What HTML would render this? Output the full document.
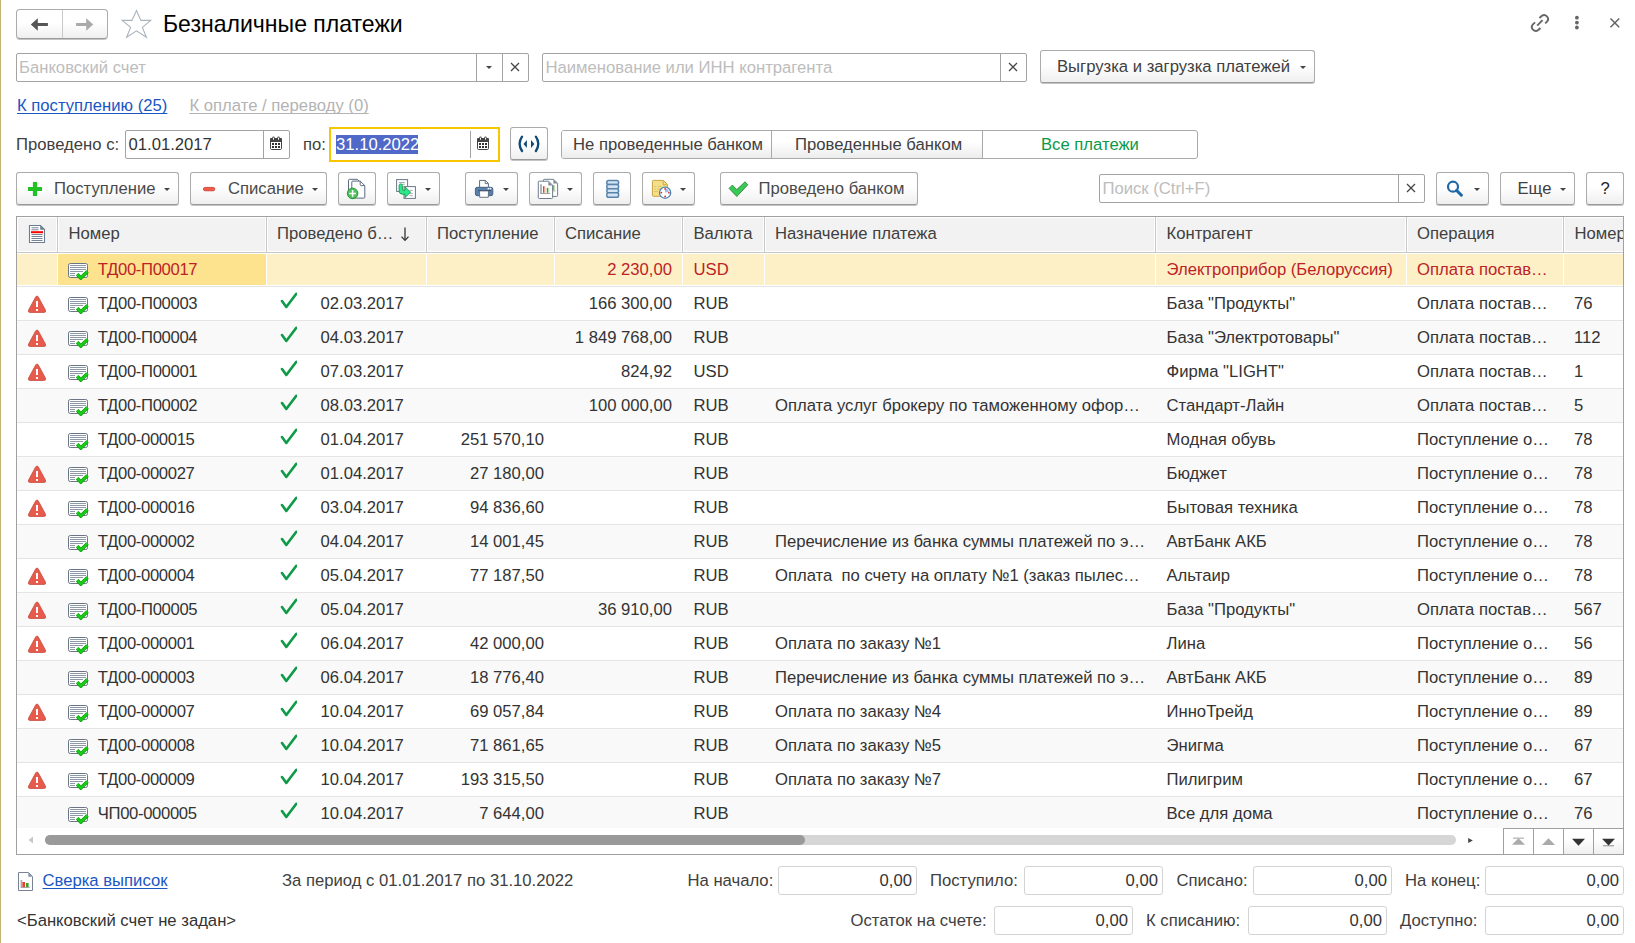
<!DOCTYPE html><html><head><meta charset="utf-8"><title>Безналичные платежи</title><style>
*{margin:0;padding:0;box-sizing:content-box}
html,body{width:1635px;height:943px;overflow:hidden;background:#fff}
body{position:relative;font-family:"Liberation Sans",sans-serif;font-size:16.67px}
.a{position:absolute;display:block}
.t{position:absolute;white-space:pre;line-height:20px;font-size:16.67px}
.btn{position:absolute;border:1px solid #ababab;border-bottom-color:#9a9a9a;background:linear-gradient(#fff 0,#fff 45%,#efefef 100%);box-shadow:0 1px 0 #c4c4c4}
.inp{position:absolute;border:1px solid #a3a3a3;border-radius:2px;background:#fff}
.inp2{position:absolute;border:1px solid #d3d3d3;border-radius:3px;background:#fff}
.u{text-decoration:underline;text-decoration-skip-ink:none;text-underline-offset:2px}
</style></head><body>
<div class="a" style="left:0px;top:0px;width:1px;height:943px;background:#c1b571"></div>
<div class="btn" style="left:16px;top:9px;width:90px;height:28px;border-radius:4px"></div>
<div class="a" style="left:62px;top:10px;width:1px;height:28px;background:#c9c9c9"></div>
<svg class="a" style="left:30px;top:18px;" width="18" height="13" viewBox="0 0 18 13"><path d="M0.8 6.5L7.8 0.2V4.9H17.9V8.1H7.8V12.8Z" fill="#555"/></svg>
<svg class="a" style="left:76px;top:18px;" width="18" height="13" viewBox="0 0 18 13"><path d="M17.2 6.5L10.2 0.2V4.9H0.1V8.1H10.2V12.8Z" fill="#aaa"/></svg>
<svg class="a" style="left:120px;top:8px;" width="34" height="32" viewBox="0 0 34 32"><path d="M16.5 2.6L20.9 12.4H30.7L22.4 19.4L26.4 29.3L16.5 22.8L6.6 29.3L10.6 19.4L2.2 12.4H11.9Z" fill="none" stroke="#aab3bd" stroke-width="1.1" stroke-linejoin="miter"/></svg>
<div class="t" style="left:162.5px;top:12px;font-size:24px;line-height:24px;color:#000;transform:scaleX(0.96);transform-origin:0 0">Безналичные платежи</div>
<svg class="a" style="left:1529px;top:12px;" width="22" height="22" viewBox="0 0 22 22"><g fill="none" stroke="#666" stroke-width="1.9"><path d="M10.45 6.06L12.61 3.99A3.9 3.9 0 0 1 17.99 9.61L16.19 11.34"/><path d="M6.07 10.32L3.91 12.39A3.9 3.9 0 0 0 9.29 18.01L11.45 15.94"/><path d="M8.2 13.7L13.5 8.1"/></g></svg>
<svg class="a" style="left:1573px;top:15px;" width="8" height="16" viewBox="0 0 8 16"><g fill="#666"><circle cx="3.9" cy="2.7" r="1.9"/><circle cx="3.9" cy="7.6" r="1.9"/><circle cx="3.9" cy="12.5" r="1.9"/></g></svg>
<svg class="a" style="left:1609px;top:17px;" width="12" height="12" viewBox="0 0 12 12"><path d="M1.5 1.5L10.2 10.2M10.2 1.5L1.5 10.2" stroke="#666" stroke-width="1.5"/></svg>
<div class="inp" style="left:16px;top:53px;width:511px;height:27px"></div>
<div class="a" style="left:476px;top:54px;width:1px;height:27px;background:#a3a3a3"></div>
<div class="a" style="left:502px;top:54px;width:1px;height:27px;background:#a3a3a3"></div>
<svg class="a" style="left:486px;top:66px;" width="6" height="3" viewBox="0 0 6 3"><path d="M0 0H6L3 3Z" fill="#444"/></svg>
<svg class="a" style="left:510.0px;top:62.0px;" width="10" height="10" viewBox="0 0 10 10"><path d="M1 1L9 9M9 1L1 9" stroke="#444" stroke-width="1.3"/></svg>
<div class="t " style="left:19px;top:58px;color:#bdbdbd;">Банковский счет</div>
<div class="inp" style="left:542px;top:53px;width:483px;height:27px"></div>
<div class="a" style="left:1000px;top:54px;width:1px;height:27px;background:#a3a3a3"></div>
<svg class="a" style="left:1008.0px;top:62.0px;" width="10" height="10" viewBox="0 0 10 10"><path d="M1 1L9 9M9 1L1 9" stroke="#444" stroke-width="1.3"/></svg>
<div class="t " style="left:545.5px;top:58px;color:#bdbdbd;">Наименование или ИНН контрагента</div>
<div class="btn" style="left:1040px;top:50px;width:273px;height:31px;border-radius:3px"></div>
<div class="t " style="left:1057px;top:57px;color:#404040;">Выгрузка и загрузка платежей</div>
<svg class="a" style="left:1300px;top:66px;" width="6" height="3" viewBox="0 0 6 3"><path d="M0 0H6L3 3Z" fill="#444"/></svg>
<div class="t u" style="left:17px;top:96px;color:#1a56c4;">К поступлению (25)</div>
<div class="t u" style="left:189.5px;top:96px;color:#b3b3b3;">К оплате / переводу (0)</div>
<div class="t " style="left:16px;top:135px;color:#404040;">Проведено с:</div>
<div class="inp" style="left:125px;top:130px;width:163px;height:27px"></div>
<div class="a" style="left:263px;top:131px;width:1px;height:27px;background:#a3a3a3"></div>
<div class="t " style="left:128.5px;top:135px;color:#333;">01.01.2017</div>
<svg class="a" style="left:270px;top:136px;" width="12" height="14" viewBox="0 0 12 14"><rect x="0.5" y="2.5" width="11" height="11" rx="1.2" fill="#fff" stroke="#444" stroke-width="1"/><rect x="0" y="2" width="12" height="4" rx="1.2" fill="#444"/><rect x="2.3" y="0.6" width="2.4" height="3.4" rx="1.2" fill="#444"/><rect x="7.3" y="0.6" width="2.4" height="3.4" rx="1.2" fill="#444"/><rect x="3" y="1.6" width="1" height="2.2" rx="0.5" fill="#fff"/><rect x="8" y="1.6" width="1" height="2.2" rx="0.5" fill="#fff"/><g fill="#333"><rect x="2" y="7" width="2" height="2"/><rect x="5" y="7" width="2" height="2"/><rect x="8" y="7" width="2" height="2"/><rect x="2" y="10" width="2" height="2"/><rect x="5" y="10" width="2" height="2"/><rect x="8" y="10" width="2" height="2"/></g></svg>
<div class="t " style="left:303px;top:135px;color:#404040;">по:</div>
<div class="a" style="left:329px;top:127px;width:167px;height:31px;border:2px solid #f7c600;background:#fff"></div>
<div class="a" style="left:470px;top:131px;width:1px;height:27px;background:#a3a3a3"></div>
<div class="a" style="left:336px;top:135px;width:82px;height:19px;background:#5068c8"></div>
<div class="t " style="left:336px;top:135px;color:#fff;">31.10.2022</div>
<svg class="a" style="left:477px;top:136px;" width="12" height="14" viewBox="0 0 12 14"><rect x="0.5" y="2.5" width="11" height="11" rx="1.2" fill="#fff" stroke="#444" stroke-width="1"/><rect x="0" y="2" width="12" height="4" rx="1.2" fill="#444"/><rect x="2.3" y="0.6" width="2.4" height="3.4" rx="1.2" fill="#444"/><rect x="7.3" y="0.6" width="2.4" height="3.4" rx="1.2" fill="#444"/><rect x="3" y="1.6" width="1" height="2.2" rx="0.5" fill="#fff"/><rect x="8" y="1.6" width="1" height="2.2" rx="0.5" fill="#fff"/><g fill="#333"><rect x="2" y="7" width="2" height="2"/><rect x="5" y="7" width="2" height="2"/><rect x="8" y="7" width="2" height="2"/><rect x="2" y="10" width="2" height="2"/><rect x="5" y="10" width="2" height="2"/><rect x="8" y="10" width="2" height="2"/></g></svg>
<div class="btn" style="left:510px;top:127px;width:36px;height:31px;border-radius:3px"></div>
<svg class="a" style="left:516px;top:134px;" width="26" height="20" viewBox="0 0 26 20"><g fill="none" stroke="#0d4a78" stroke-width="2.3" stroke-linecap="round"><path d="M6 2.7Q1.2 9.8 6 17"/><path d="M19.9 2.7Q24.7 9.8 19.9 17"/></g><path d="M7.5 9.9L10.9 5.9V14Z" fill="#0d4a78"/><path d="M18.4 9.9L15 5.9V14Z" fill="#0d4a78"/></svg>
<div class="a" style="left:561px;top:130px;width:635px;height:27px;border:1px solid #a9a9a9;border-radius:3px;background:#fff;overflow:hidden"><div class="a" style="left:0;top:0;width:421px;height:27px;background:linear-gradient(#fff 0,#fff 40%,#ececec 100%)"></div><div class="a" style="left:209px;top:0;width:1px;height:27px;background:#a9a9a9"></div><div class="a" style="left:420px;top:0;width:1px;height:27px;background:#a9a9a9"></div></div>
<div class="t " style="left:573px;top:135px;color:#404040;">Не проведенные банком</div>
<div class="t " style="left:795px;top:135px;color:#404040;">Проведенные банком</div>
<div class="t " style="left:1041px;top:135px;color:#0a9a48;">Все платежи</div>
<div class="btn" style="left:16px;top:172px;width:161px;height:31px;border-radius:3px"></div>
<svg class="a" style="left:27px;top:181px;" width="16" height="16" viewBox="0 0 16 16"><path d="M5.9 1H10.1V5.9H15V10.1H10.1V15H5.9V10.1H1V5.9H5.9Z" fill="#22c222"/></svg>
<div class="t " style="left:54px;top:179px;color:#4a4a4a;">Поступление</div>
<svg class="a" style="left:164px;top:188px;" width="6" height="3" viewBox="0 0 6 3"><path d="M0 0H6L3 3Z" fill="#444"/></svg>
<div class="btn" style="left:190px;top:172px;width:135px;height:31px;border-radius:3px"></div>
<svg class="a" style="left:202px;top:186px;" width="14" height="6" viewBox="0 0 14 6"><rect x="1.4" y="1.4" width="11.4" height="3.4" rx="1.7" fill="#ee5b4c" stroke="#c8382a" stroke-width="0.8"/></svg>
<div class="t " style="left:228px;top:179px;color:#4a4a4a;">Списание</div>
<svg class="a" style="left:312px;top:188px;" width="6" height="3" viewBox="0 0 6 3"><path d="M0 0H6L3 3Z" fill="#444"/></svg>
<div class="btn" style="left:338px;top:172px;width:36px;height:31px;border-radius:3px"></div>
<svg class="a" style="left:344px;top:176px;" width="26" height="26" viewBox="0 0 26 26"><g fill="#fff" stroke="#5b6b7e" stroke-width="1"><path d="M4.5 18V4.2Q4.5 3.3 5.4 3.3H13.2L15 5"/><path d="M7.8 22.1V6Q7.8 5.1 8.7 5.1H16.2L20.8 9.6V21.2Q20.8 22.1 19.9 22.1Z"/><path d="M16.2 5.3V8.6Q16.2 9.6 17.2 9.6H20.6" fill="none"/></g><circle cx="8.6" cy="17.4" r="5.3" fill="#52bf5e" stroke="#17922a" stroke-width="0.9"/><path d="M5.2 17.4H12M8.6 14V20.8" stroke="#fff" stroke-width="1.5"/></svg>
<div class="btn" style="left:387px;top:172px;width:51px;height:31px;border-radius:3px"></div>
<svg class="a" style="left:393px;top:176px;" width="26" height="26" viewBox="0 0 26 26"><rect x="3.6" y="3.6" width="11" height="11.8" fill="#fff" stroke="#6b7889" stroke-width="1"/><path d="M6 6.5H11.8M8.8 8.3H11.8" stroke="#9aa5b2" stroke-width="0.9"/><rect x="11" y="10.6" width="11.4" height="11.8" fill="#fff" stroke="#6b7889" stroke-width="1"/><path d="M16.5 14.3H19.8M16.5 17.4H19.8M16.5 19.6H19.8" stroke="#9aa5b2" stroke-width="0.9"/><path d="M6.1 9.6Q6.1 7.9 7.7 7.9Q9.4 7.9 9.4 9.6V13.6Q9.4 14.3 10.2 14.3H12V10.9L17.6 16.2L12 21.6V18.2H9.4Q6.1 18.2 6.1 14.8Z" fill="#2ee88c" stroke="#17984a" stroke-width="0.9" stroke-linejoin="round"/></svg>
<svg class="a" style="left:425px;top:188px;" width="6" height="3" viewBox="0 0 6 3"><path d="M0 0H6L3 3Z" fill="#444"/></svg>
<div class="btn" style="left:465px;top:172px;width:51px;height:31px;border-radius:3px"></div>
<svg class="a" style="left:471px;top:176px;" width="26" height="26" viewBox="0 0 26 26"><path d="M8.6 11V4.4H14.4L17.4 7.4V11" fill="#fff" stroke="#5c6878" stroke-width="1"/><path d="M14.2 4.6V7.6H17.2" fill="none" stroke="#5c6878" stroke-width="0.9"/><rect x="4.4" y="11.3" width="17.4" height="8.4" rx="1.8" fill="#5a80aa" stroke="#395a82" stroke-width="0.9"/><rect x="7.2" y="14" width="12.8" height="1.1" fill="#3a5070"/><circle cx="17.4" cy="12.6" r="0.9" fill="#fff"/><circle cx="19.5" cy="12.6" r="0.9" fill="#fff"/><path d="M8.5 14.9H17.5L17.3 21.3H8.7Z" fill="#fff" stroke="#5c6878" stroke-width="0.9"/></svg>
<svg class="a" style="left:503px;top:188px;" width="6" height="3" viewBox="0 0 6 3"><path d="M0 0H6L3 3Z" fill="#444"/></svg>
<div class="btn" style="left:529px;top:172px;width:51px;height:31px;border-radius:3px"></div>
<svg class="a" style="left:535px;top:176px;" width="26" height="26" viewBox="0 0 26 26"><path d="M8.4 14V4.2Q8.4 3.3 9.3 3.3H18.6L22.6 7.3V19.6Q22.6 20.4 21.8 20.4H17.6" fill="#fff" stroke="#6e7d8e" stroke-width="1"/><path d="M18.4 3.5V7.5H22.4Z" fill="#7d8a99"/><rect x="17.2" y="9.2" width="1.6" height="5" fill="#4aa83a"/><rect x="18.8" y="9.2" width="1" height="5" fill="#a8dca0"/><rect x="17" y="14.4" width="3.5" height="1" fill="#aaa"/><path d="M3.3 21.6V6.1Q3.3 5.2 4.2 5.2H13.6L17.6 9.2V21.6Q17.6 22.5 16.7 22.5H4.2Q3.3 22.5 3.3 21.6Z" fill="#fff" stroke="#6e7d8e" stroke-width="1"/><path d="M13.4 5.4V9.4H17.4Z" fill="#7d8a99"/><rect x="5.2" y="8.3" width="1.7" height="8.8" fill="#a8a8a8"/><rect x="8" y="10.2" width="1.5" height="6.6" fill="#e8402a"/><rect x="9.5" y="10.2" width="1" height="6.6" fill="#f6b0a8"/><rect x="11.8" y="11.9" width="1.5" height="4.9" fill="#3aa02a"/><rect x="13.3" y="11.9" width="1" height="4.9" fill="#b0dca8"/><rect x="5.2" y="17" width="10" height="0.9" fill="#999"/></svg>
<svg class="a" style="left:567px;top:188px;" width="6" height="3" viewBox="0 0 6 3"><path d="M0 0H6L3 3Z" fill="#444"/></svg>
<div class="btn" style="left:593px;top:172px;width:36px;height:31px;border-radius:3px"></div>
<svg class="a" style="left:599px;top:176px;" width="26" height="26" viewBox="0 0 26 26"><g fill="#d3e5f5" stroke="#5a83aa" stroke-width="1.5"><rect x="7.8" y="4.6" width="11.8" height="4" rx="1.8"/><rect x="7.8" y="8.6" width="11.8" height="4.1" rx="1.8"/><rect x="7.8" y="12.7" width="11.8" height="4.1" rx="1.8"/><rect x="7.8" y="16.8" width="11.8" height="4.4" rx="1.8"/></g></svg>
<div class="btn" style="left:642px;top:172px;width:51px;height:31px;border-radius:3px"></div>
<svg class="a" style="left:648px;top:176px;" width="26" height="26" viewBox="0 0 26 26"><path d="M4.4 19.4V5.3Q4.4 4.4 5.3 4.4H15.4L19.6 8.6V19.4Q19.6 20.3 18.7 20.3H5.3Q4.4 20.3 4.4 19.4Z" fill="#f3df88" stroke="#c9a440" stroke-width="1"/><path d="M15.2 4.6V8.8H19.4" fill="none" stroke="#c9a440" stroke-width="0.9"/><path d="M6.3 10.5H8.4M10 10.5H13.4M6.3 13.2H7.9M9.5 13.2H12M6.3 15.5H10" stroke="#d8c070" stroke-width="0.9"/><circle cx="17.1" cy="16.7" r="5.6" fill="#fff" stroke="#4e82b5" stroke-width="1.3"/><path d="M17.1 16.7V12.6A4.1 4.1 0 0 1 21 15.2Z" fill="#98b8e0"/><g fill="#e03030"><circle cx="17.1" cy="12.9" r="0.9"/><circle cx="17.1" cy="20.5" r="0.9"/><circle cx="13.3" cy="16.7" r="0.9"/><circle cx="20.9" cy="16.7" r="0.9"/></g></svg>
<svg class="a" style="left:680px;top:188px;" width="6" height="3" viewBox="0 0 6 3"><path d="M0 0H6L3 3Z" fill="#444"/></svg>
<div class="btn" style="left:720px;top:172px;width:196px;height:31px;border-radius:3px"></div>
<svg class="a" style="left:724px;top:176px;" width="30" height="26" viewBox="0 0 30 26"><path d="M5.1 12.4L8.4 9.1L12.8 13.6L21 5.8L23.8 8.8L12.8 20.5Z" fill="#3ac858" stroke="#2a7d2a" stroke-width="0.8" stroke-linejoin="round"/></svg>
<div class="t " style="left:758.5px;top:179px;color:#4a4a4a;">Проведено банком</div>
<div class="inp" style="left:1099px;top:174px;width:324px;height:27px"></div>
<div class="a" style="left:1398px;top:175px;width:1px;height:27px;background:#a3a3a3"></div>
<svg class="a" style="left:1406.0px;top:183.0px;" width="10" height="10" viewBox="0 0 10 10"><path d="M1 1L9 9M9 1L1 9" stroke="#444" stroke-width="1.3"/></svg>
<div class="t " style="left:1102.5px;top:179px;color:#bdbdbd;">Поиск (Ctrl+F)</div>
<div class="btn" style="left:1436px;top:172px;width:51px;height:31px;border-radius:3px"></div>
<svg class="a" style="left:1445px;top:179px;" width="20" height="20" viewBox="0 0 20 20"><circle cx="8" cy="7.7" r="5" fill="none" stroke="#1f68a6" stroke-width="2.2"/><path d="M11.6 11.4L16.4 16.2" stroke="#1f68a6" stroke-width="3" stroke-linecap="round"/></svg>
<svg class="a" style="left:1474px;top:188px;" width="6" height="3" viewBox="0 0 6 3"><path d="M0 0H6L3 3Z" fill="#444"/></svg>
<div class="btn" style="left:1500px;top:172px;width:73px;height:31px;border-radius:3px"></div>
<div class="t " style="left:1517.5px;top:179px;color:#404040;">Еще</div>
<svg class="a" style="left:1560px;top:188px;" width="6" height="3" viewBox="0 0 6 3"><path d="M0 0H6L3 3Z" fill="#444"/></svg>
<div class="btn" style="left:1586px;top:172px;width:36px;height:31px;border-radius:3px"></div>
<div class="t " style="left:1600.5px;top:179px;color:#222;">?</div>
<div class="a" style="left:16px;top:216px;width:1606px;height:637px;border:1px solid #a0a0a0;background:#fff"></div>
<div class="a" style="left:17px;top:217px;width:1606px;height:35px;background:#fff"></div>
<div class="a" style="left:18px;top:218px;width:38px;height:33px;background:#f2f2f2"></div>
<div class="a" style="left:59px;top:218px;width:206px;height:33px;background:#f2f2f2"></div>
<div class="a" style="left:268px;top:218px;width:157px;height:33px;background:#f2f2f2"></div>
<div class="a" style="left:428px;top:218px;width:125px;height:33px;background:#f2f2f2"></div>
<div class="a" style="left:556px;top:218px;width:125px;height:33px;background:#f2f2f2"></div>
<div class="a" style="left:684px;top:218px;width:79px;height:33px;background:#f2f2f2"></div>
<div class="a" style="left:766px;top:218px;width:388px;height:33px;background:#f2f2f2"></div>
<div class="a" style="left:1157px;top:218px;width:248px;height:33px;background:#f2f2f2"></div>
<div class="a" style="left:1408px;top:218px;width:154px;height:33px;background:#f2f2f2"></div>
<div class="a" style="left:1565px;top:218px;width:58px;height:33px;background:#f2f2f2"></div>
<div class="a" style="left:57px;top:217px;width:1px;height:35px;background:#c8c8c8"></div>
<div class="a" style="left:266px;top:217px;width:1px;height:35px;background:#c8c8c8"></div>
<div class="a" style="left:426px;top:217px;width:1px;height:35px;background:#c8c8c8"></div>
<div class="a" style="left:554px;top:217px;width:1px;height:35px;background:#c8c8c8"></div>
<div class="a" style="left:682px;top:217px;width:1px;height:35px;background:#c8c8c8"></div>
<div class="a" style="left:764px;top:217px;width:1px;height:35px;background:#c8c8c8"></div>
<div class="a" style="left:1155px;top:217px;width:1px;height:35px;background:#c8c8c8"></div>
<div class="a" style="left:1406px;top:217px;width:1px;height:35px;background:#c8c8c8"></div>
<div class="a" style="left:1563px;top:217px;width:1px;height:35px;background:#c8c8c8"></div>
<div class="a" style="left:17px;top:252px;width:1606px;height:1px;background:#c8c8c8"></div>
<svg class="a" style="left:28px;top:224px;" width="18" height="20" viewBox="0 0 18 20"><path d="M1.5 18.5V1.5H12.5L16.5 5.5V18.5Z" fill="#fff" stroke="#6c7d90" stroke-width="1.1"/><path d="M12.2 1.6V5.8H16.4Z" fill="#6c7d90"/><g stroke="#75869a" stroke-width="1"><path d="M3.5 3.8H10.5M3.5 5.8H10.5M3.5 10.5H14.5M3.5 12.5H14.5M3.5 14.5H14.5M3.5 16.5H14.5"/></g><rect x="3" y="7.2" width="12" height="2" fill="#f00"/></svg>
<div class="t " style="left:68.5px;top:224px;color:#404040;">Номер</div>
<div class="t " style="left:277px;top:224px;color:#404040;">Проведено б…</div>
<svg class="a" style="left:400px;top:227px;" width="10" height="15" viewBox="0 0 10 15"><path d="M5 0.5V13" stroke="#333" stroke-width="1.3"/><path d="M1.5 9.6L5 13.4L8.5 9.6" fill="none" stroke="#333" stroke-width="1.3"/></svg>
<div class="t " style="left:437px;top:224px;color:#404040;">Поступление</div>
<div class="t " style="left:565px;top:224px;color:#404040;">Списание</div>
<div class="t " style="left:693.5px;top:224px;color:#404040;">Валюта</div>
<div class="t " style="left:775px;top:224px;color:#404040;">Назначение платежа</div>
<div class="t " style="left:1166.5px;top:224px;color:#404040;">Контрагент</div>
<div class="t " style="left:1417px;top:224px;color:#404040;">Операция</div>
<div class="a" style="left:1564px;top:218px;width:59px;height:33px;overflow:hidden"><div class="t" style="left:10.5px;top:6px;color:#404040">Номер</div></div>
<div class="a" style="left:17px;top:253px;width:1606px;height:575px;overflow:hidden">
<div class="a" style="left:0px;top:1px;width:40px;height:31px;background:#fdf0c6"></div>
<div class="a" style="left:41px;top:1px;width:208px;height:31px;background:#fde38e"></div>
<div class="a" style="left:250px;top:1px;width:159px;height:31px;background:#fdf0c6"></div>
<div class="a" style="left:410px;top:1px;width:127px;height:31px;background:#fdf0c6"></div>
<div class="a" style="left:538px;top:1px;width:127px;height:31px;background:#fdf0c6"></div>
<div class="a" style="left:666px;top:1px;width:81px;height:31px;background:#fdf0c6"></div>
<div class="a" style="left:748px;top:1px;width:390px;height:31px;background:#fdf0c6"></div>
<div class="a" style="left:1139px;top:1px;width:250px;height:31px;background:#fdf0c6"></div>
<div class="a" style="left:1390px;top:1px;width:156px;height:31px;background:#fdf0c6"></div>
<div class="a" style="left:1547px;top:1px;width:59px;height:31px;background:#fdf0c6"></div>
<div class="a" style="left:0px;top:33px;width:1606px;height:1px;background:#e4e4e4"></div>
<svg class="a" style="left:51px;top:10px" width="21" height="17" viewBox="0 0 21 17"><rect x="0.5" y="0.5" width="19" height="14" rx="1.8" fill="#fff" stroke="#6b7585" stroke-width="1"/><g stroke="#8d99a6" stroke-width="1"><path d="M2 2.5H18M2 4.5H18M2 6.5H18M2 8.5H15M2 10.5H7M2 12.5H7"/></g><path d="M9.2 11.3L12.8 15L19.5 8.5" fill="none" stroke="#139a13" stroke-width="3.6" stroke-linejoin="miter"/><path d="M9.2 11.3L12.8 15L19.5 8.5" fill="none" stroke="#16d016" stroke-width="2.2" stroke-linejoin="miter"/></svg>
<div class="t" style="left:80.8px;top:7px;color:#bc2228;letter-spacing:-0.35px">ТД00-П00017</div>
<div class="t" style="right:951px;top:7px;color:#bc2228">2 230,00</div>
<div class="t" style="left:676.5px;top:7px;color:#bc2228">USD</div>
<div class="t" style="left:1149.5px;top:7px;color:#bc2228">Электроприбор (Белоруссия)</div>
<div class="t" style="left:1400px;top:7px;color:#bc2228">Оплата постав…</div>
<div class="a" style="left:0px;top:34px;width:1606px;height:33px;background:#fff"></div>
<div class="a" style="left:0px;top:67px;width:1606px;height:1px;background:#e4e4e4"></div>
<svg class="a" style="left:11px;top:42px" width="18" height="19" viewBox="0 0 18 19"><path d="M9 1.1Q9.8 1.1 10.3 1.9L17.5 15.2Q18 17.4 16.4 17.4H1.6Q0 17.4 0.5 15.2L7.7 1.9Q8.2 1.1 9 1.1Z" fill="#e85b4c" stroke="#c4473a" stroke-width="0.8"/><rect x="8" y="6" width="2" height="6" fill="#fff"/><rect x="8" y="14" width="2" height="2" fill="#fff"/></svg>
<svg class="a" style="left:51px;top:44px" width="21" height="17" viewBox="0 0 21 17"><rect x="0.5" y="0.5" width="19" height="14" rx="1.8" fill="#fff" stroke="#6b7585" stroke-width="1"/><g stroke="#8d99a6" stroke-width="1"><path d="M2 2.5H18M2 4.5H18M2 6.5H18M2 8.5H15M2 10.5H7M2 12.5H7"/></g><path d="M9.2 11.3L12.8 15L19.5 8.5" fill="none" stroke="#139a13" stroke-width="3.6" stroke-linejoin="miter"/><path d="M9.2 11.3L12.8 15L19.5 8.5" fill="none" stroke="#16d016" stroke-width="2.2" stroke-linejoin="miter"/></svg>
<div class="t" style="left:80.8px;top:41px;color:#333;letter-spacing:-0.35px">ТД00-П00003</div>
<svg class="a" style="left:263px;top:39px" width="17" height="17" viewBox="0 0 17 17"><path d="M2 9L6.3 15L16.3 1.8" fill="none" stroke="#0f9a48" stroke-width="2.6" stroke-linecap="round" stroke-linejoin="round"/></svg>
<div class="t" style="left:303.5px;top:41px;color:#333">02.03.2017</div>
<div class="t" style="right:951px;top:41px;color:#333">166 300,00</div>
<div class="t" style="left:676.5px;top:41px;color:#333">RUB</div>
<div class="t" style="left:1149.5px;top:41px;color:#333">База "Продукты"</div>
<div class="t" style="left:1400px;top:41px;color:#333">Оплата постав…</div>
<div class="t" style="left:1557px;top:41px;color:#333">76</div>
<div class="a" style="left:0px;top:68px;width:1606px;height:33px;background:#f9f9f9"></div>
<div class="a" style="left:0px;top:101px;width:1606px;height:1px;background:#e4e4e4"></div>
<svg class="a" style="left:11px;top:76px" width="18" height="19" viewBox="0 0 18 19"><path d="M9 1.1Q9.8 1.1 10.3 1.9L17.5 15.2Q18 17.4 16.4 17.4H1.6Q0 17.4 0.5 15.2L7.7 1.9Q8.2 1.1 9 1.1Z" fill="#e85b4c" stroke="#c4473a" stroke-width="0.8"/><rect x="8" y="6" width="2" height="6" fill="#fff"/><rect x="8" y="14" width="2" height="2" fill="#fff"/></svg>
<svg class="a" style="left:51px;top:78px" width="21" height="17" viewBox="0 0 21 17"><rect x="0.5" y="0.5" width="19" height="14" rx="1.8" fill="#fff" stroke="#6b7585" stroke-width="1"/><g stroke="#8d99a6" stroke-width="1"><path d="M2 2.5H18M2 4.5H18M2 6.5H18M2 8.5H15M2 10.5H7M2 12.5H7"/></g><path d="M9.2 11.3L12.8 15L19.5 8.5" fill="none" stroke="#139a13" stroke-width="3.6" stroke-linejoin="miter"/><path d="M9.2 11.3L12.8 15L19.5 8.5" fill="none" stroke="#16d016" stroke-width="2.2" stroke-linejoin="miter"/></svg>
<div class="t" style="left:80.8px;top:75px;color:#333;letter-spacing:-0.35px">ТД00-П00004</div>
<svg class="a" style="left:263px;top:73px" width="17" height="17" viewBox="0 0 17 17"><path d="M2 9L6.3 15L16.3 1.8" fill="none" stroke="#0f9a48" stroke-width="2.6" stroke-linecap="round" stroke-linejoin="round"/></svg>
<div class="t" style="left:303.5px;top:75px;color:#333">04.03.2017</div>
<div class="t" style="right:951px;top:75px;color:#333">1 849 768,00</div>
<div class="t" style="left:676.5px;top:75px;color:#333">RUB</div>
<div class="t" style="left:1149.5px;top:75px;color:#333">База "Электротовары"</div>
<div class="t" style="left:1400px;top:75px;color:#333">Оплата постав…</div>
<div class="t" style="left:1557px;top:75px;color:#333">112</div>
<div class="a" style="left:0px;top:102px;width:1606px;height:33px;background:#fff"></div>
<div class="a" style="left:0px;top:135px;width:1606px;height:1px;background:#e4e4e4"></div>
<svg class="a" style="left:11px;top:110px" width="18" height="19" viewBox="0 0 18 19"><path d="M9 1.1Q9.8 1.1 10.3 1.9L17.5 15.2Q18 17.4 16.4 17.4H1.6Q0 17.4 0.5 15.2L7.7 1.9Q8.2 1.1 9 1.1Z" fill="#e85b4c" stroke="#c4473a" stroke-width="0.8"/><rect x="8" y="6" width="2" height="6" fill="#fff"/><rect x="8" y="14" width="2" height="2" fill="#fff"/></svg>
<svg class="a" style="left:51px;top:112px" width="21" height="17" viewBox="0 0 21 17"><rect x="0.5" y="0.5" width="19" height="14" rx="1.8" fill="#fff" stroke="#6b7585" stroke-width="1"/><g stroke="#8d99a6" stroke-width="1"><path d="M2 2.5H18M2 4.5H18M2 6.5H18M2 8.5H15M2 10.5H7M2 12.5H7"/></g><path d="M9.2 11.3L12.8 15L19.5 8.5" fill="none" stroke="#139a13" stroke-width="3.6" stroke-linejoin="miter"/><path d="M9.2 11.3L12.8 15L19.5 8.5" fill="none" stroke="#16d016" stroke-width="2.2" stroke-linejoin="miter"/></svg>
<div class="t" style="left:80.8px;top:109px;color:#333;letter-spacing:-0.35px">ТД00-П00001</div>
<svg class="a" style="left:263px;top:107px" width="17" height="17" viewBox="0 0 17 17"><path d="M2 9L6.3 15L16.3 1.8" fill="none" stroke="#0f9a48" stroke-width="2.6" stroke-linecap="round" stroke-linejoin="round"/></svg>
<div class="t" style="left:303.5px;top:109px;color:#333">07.03.2017</div>
<div class="t" style="right:951px;top:109px;color:#333">824,92</div>
<div class="t" style="left:676.5px;top:109px;color:#333">USD</div>
<div class="t" style="left:1149.5px;top:109px;color:#333">Фирма "LIGHT"</div>
<div class="t" style="left:1400px;top:109px;color:#333">Оплата постав…</div>
<div class="t" style="left:1557px;top:109px;color:#333">1</div>
<div class="a" style="left:0px;top:136px;width:1606px;height:33px;background:#f9f9f9"></div>
<div class="a" style="left:0px;top:169px;width:1606px;height:1px;background:#e4e4e4"></div>
<svg class="a" style="left:51px;top:146px" width="21" height="17" viewBox="0 0 21 17"><rect x="0.5" y="0.5" width="19" height="14" rx="1.8" fill="#fff" stroke="#6b7585" stroke-width="1"/><g stroke="#8d99a6" stroke-width="1"><path d="M2 2.5H18M2 4.5H18M2 6.5H18M2 8.5H15M2 10.5H7M2 12.5H7"/></g><path d="M9.2 11.3L12.8 15L19.5 8.5" fill="none" stroke="#139a13" stroke-width="3.6" stroke-linejoin="miter"/><path d="M9.2 11.3L12.8 15L19.5 8.5" fill="none" stroke="#16d016" stroke-width="2.2" stroke-linejoin="miter"/></svg>
<div class="t" style="left:80.8px;top:143px;color:#333;letter-spacing:-0.35px">ТД00-П00002</div>
<svg class="a" style="left:263px;top:141px" width="17" height="17" viewBox="0 0 17 17"><path d="M2 9L6.3 15L16.3 1.8" fill="none" stroke="#0f9a48" stroke-width="2.6" stroke-linecap="round" stroke-linejoin="round"/></svg>
<div class="t" style="left:303.5px;top:143px;color:#333">08.03.2017</div>
<div class="t" style="right:951px;top:143px;color:#333">100 000,00</div>
<div class="t" style="left:676.5px;top:143px;color:#333">RUB</div>
<div class="t" style="left:758px;top:143px;color:#333">Оплата услуг брокеру по таможенному офор…</div>
<div class="t" style="left:1149.5px;top:143px;color:#333">Стандарт-Лайн</div>
<div class="t" style="left:1400px;top:143px;color:#333">Оплата постав…</div>
<div class="t" style="left:1557px;top:143px;color:#333">5</div>
<div class="a" style="left:0px;top:170px;width:1606px;height:33px;background:#fff"></div>
<div class="a" style="left:0px;top:203px;width:1606px;height:1px;background:#e4e4e4"></div>
<svg class="a" style="left:51px;top:180px" width="21" height="17" viewBox="0 0 21 17"><rect x="0.5" y="0.5" width="19" height="14" rx="1.8" fill="#fff" stroke="#6b7585" stroke-width="1"/><g stroke="#8d99a6" stroke-width="1"><path d="M2 2.5H18M2 4.5H18M2 6.5H18M2 8.5H15M2 10.5H7M2 12.5H7"/></g><path d="M9.2 11.3L12.8 15L19.5 8.5" fill="none" stroke="#139a13" stroke-width="3.6" stroke-linejoin="miter"/><path d="M9.2 11.3L12.8 15L19.5 8.5" fill="none" stroke="#16d016" stroke-width="2.2" stroke-linejoin="miter"/></svg>
<div class="t" style="left:80.8px;top:177px;color:#333;letter-spacing:-0.35px">ТД00-000015</div>
<svg class="a" style="left:263px;top:175px" width="17" height="17" viewBox="0 0 17 17"><path d="M2 9L6.3 15L16.3 1.8" fill="none" stroke="#0f9a48" stroke-width="2.6" stroke-linecap="round" stroke-linejoin="round"/></svg>
<div class="t" style="left:303.5px;top:177px;color:#333">01.04.2017</div>
<div class="t" style="right:1079px;top:177px;color:#333">251 570,10</div>
<div class="t" style="left:676.5px;top:177px;color:#333">RUB</div>
<div class="t" style="left:1149.5px;top:177px;color:#333">Модная обувь</div>
<div class="t" style="left:1400px;top:177px;color:#333">Поступление о…</div>
<div class="t" style="left:1557px;top:177px;color:#333">78</div>
<div class="a" style="left:0px;top:204px;width:1606px;height:33px;background:#f9f9f9"></div>
<div class="a" style="left:0px;top:237px;width:1606px;height:1px;background:#e4e4e4"></div>
<svg class="a" style="left:11px;top:212px" width="18" height="19" viewBox="0 0 18 19"><path d="M9 1.1Q9.8 1.1 10.3 1.9L17.5 15.2Q18 17.4 16.4 17.4H1.6Q0 17.4 0.5 15.2L7.7 1.9Q8.2 1.1 9 1.1Z" fill="#e85b4c" stroke="#c4473a" stroke-width="0.8"/><rect x="8" y="6" width="2" height="6" fill="#fff"/><rect x="8" y="14" width="2" height="2" fill="#fff"/></svg>
<svg class="a" style="left:51px;top:214px" width="21" height="17" viewBox="0 0 21 17"><rect x="0.5" y="0.5" width="19" height="14" rx="1.8" fill="#fff" stroke="#6b7585" stroke-width="1"/><g stroke="#8d99a6" stroke-width="1"><path d="M2 2.5H18M2 4.5H18M2 6.5H18M2 8.5H15M2 10.5H7M2 12.5H7"/></g><path d="M9.2 11.3L12.8 15L19.5 8.5" fill="none" stroke="#139a13" stroke-width="3.6" stroke-linejoin="miter"/><path d="M9.2 11.3L12.8 15L19.5 8.5" fill="none" stroke="#16d016" stroke-width="2.2" stroke-linejoin="miter"/></svg>
<div class="t" style="left:80.8px;top:211px;color:#333;letter-spacing:-0.35px">ТД00-000027</div>
<svg class="a" style="left:263px;top:209px" width="17" height="17" viewBox="0 0 17 17"><path d="M2 9L6.3 15L16.3 1.8" fill="none" stroke="#0f9a48" stroke-width="2.6" stroke-linecap="round" stroke-linejoin="round"/></svg>
<div class="t" style="left:303.5px;top:211px;color:#333">01.04.2017</div>
<div class="t" style="right:1079px;top:211px;color:#333">27 180,00</div>
<div class="t" style="left:676.5px;top:211px;color:#333">RUB</div>
<div class="t" style="left:1149.5px;top:211px;color:#333">Бюджет</div>
<div class="t" style="left:1400px;top:211px;color:#333">Поступление о…</div>
<div class="t" style="left:1557px;top:211px;color:#333">78</div>
<div class="a" style="left:0px;top:238px;width:1606px;height:33px;background:#fff"></div>
<div class="a" style="left:0px;top:271px;width:1606px;height:1px;background:#e4e4e4"></div>
<svg class="a" style="left:11px;top:246px" width="18" height="19" viewBox="0 0 18 19"><path d="M9 1.1Q9.8 1.1 10.3 1.9L17.5 15.2Q18 17.4 16.4 17.4H1.6Q0 17.4 0.5 15.2L7.7 1.9Q8.2 1.1 9 1.1Z" fill="#e85b4c" stroke="#c4473a" stroke-width="0.8"/><rect x="8" y="6" width="2" height="6" fill="#fff"/><rect x="8" y="14" width="2" height="2" fill="#fff"/></svg>
<svg class="a" style="left:51px;top:248px" width="21" height="17" viewBox="0 0 21 17"><rect x="0.5" y="0.5" width="19" height="14" rx="1.8" fill="#fff" stroke="#6b7585" stroke-width="1"/><g stroke="#8d99a6" stroke-width="1"><path d="M2 2.5H18M2 4.5H18M2 6.5H18M2 8.5H15M2 10.5H7M2 12.5H7"/></g><path d="M9.2 11.3L12.8 15L19.5 8.5" fill="none" stroke="#139a13" stroke-width="3.6" stroke-linejoin="miter"/><path d="M9.2 11.3L12.8 15L19.5 8.5" fill="none" stroke="#16d016" stroke-width="2.2" stroke-linejoin="miter"/></svg>
<div class="t" style="left:80.8px;top:245px;color:#333;letter-spacing:-0.35px">ТД00-000016</div>
<svg class="a" style="left:263px;top:243px" width="17" height="17" viewBox="0 0 17 17"><path d="M2 9L6.3 15L16.3 1.8" fill="none" stroke="#0f9a48" stroke-width="2.6" stroke-linecap="round" stroke-linejoin="round"/></svg>
<div class="t" style="left:303.5px;top:245px;color:#333">03.04.2017</div>
<div class="t" style="right:1079px;top:245px;color:#333">94 836,60</div>
<div class="t" style="left:676.5px;top:245px;color:#333">RUB</div>
<div class="t" style="left:1149.5px;top:245px;color:#333">Бытовая техника</div>
<div class="t" style="left:1400px;top:245px;color:#333">Поступление о…</div>
<div class="t" style="left:1557px;top:245px;color:#333">78</div>
<div class="a" style="left:0px;top:272px;width:1606px;height:33px;background:#f9f9f9"></div>
<div class="a" style="left:0px;top:305px;width:1606px;height:1px;background:#e4e4e4"></div>
<svg class="a" style="left:51px;top:282px" width="21" height="17" viewBox="0 0 21 17"><rect x="0.5" y="0.5" width="19" height="14" rx="1.8" fill="#fff" stroke="#6b7585" stroke-width="1"/><g stroke="#8d99a6" stroke-width="1"><path d="M2 2.5H18M2 4.5H18M2 6.5H18M2 8.5H15M2 10.5H7M2 12.5H7"/></g><path d="M9.2 11.3L12.8 15L19.5 8.5" fill="none" stroke="#139a13" stroke-width="3.6" stroke-linejoin="miter"/><path d="M9.2 11.3L12.8 15L19.5 8.5" fill="none" stroke="#16d016" stroke-width="2.2" stroke-linejoin="miter"/></svg>
<div class="t" style="left:80.8px;top:279px;color:#333;letter-spacing:-0.35px">ТД00-000002</div>
<svg class="a" style="left:263px;top:277px" width="17" height="17" viewBox="0 0 17 17"><path d="M2 9L6.3 15L16.3 1.8" fill="none" stroke="#0f9a48" stroke-width="2.6" stroke-linecap="round" stroke-linejoin="round"/></svg>
<div class="t" style="left:303.5px;top:279px;color:#333">04.04.2017</div>
<div class="t" style="right:1079px;top:279px;color:#333">14 001,45</div>
<div class="t" style="left:676.5px;top:279px;color:#333">RUB</div>
<div class="t" style="left:758px;top:279px;color:#333">Перечисление из банка суммы платежей по э…</div>
<div class="t" style="left:1149.5px;top:279px;color:#333">АвтБанк АКБ</div>
<div class="t" style="left:1400px;top:279px;color:#333">Поступление о…</div>
<div class="t" style="left:1557px;top:279px;color:#333">78</div>
<div class="a" style="left:0px;top:306px;width:1606px;height:33px;background:#fff"></div>
<div class="a" style="left:0px;top:339px;width:1606px;height:1px;background:#e4e4e4"></div>
<svg class="a" style="left:11px;top:314px" width="18" height="19" viewBox="0 0 18 19"><path d="M9 1.1Q9.8 1.1 10.3 1.9L17.5 15.2Q18 17.4 16.4 17.4H1.6Q0 17.4 0.5 15.2L7.7 1.9Q8.2 1.1 9 1.1Z" fill="#e85b4c" stroke="#c4473a" stroke-width="0.8"/><rect x="8" y="6" width="2" height="6" fill="#fff"/><rect x="8" y="14" width="2" height="2" fill="#fff"/></svg>
<svg class="a" style="left:51px;top:316px" width="21" height="17" viewBox="0 0 21 17"><rect x="0.5" y="0.5" width="19" height="14" rx="1.8" fill="#fff" stroke="#6b7585" stroke-width="1"/><g stroke="#8d99a6" stroke-width="1"><path d="M2 2.5H18M2 4.5H18M2 6.5H18M2 8.5H15M2 10.5H7M2 12.5H7"/></g><path d="M9.2 11.3L12.8 15L19.5 8.5" fill="none" stroke="#139a13" stroke-width="3.6" stroke-linejoin="miter"/><path d="M9.2 11.3L12.8 15L19.5 8.5" fill="none" stroke="#16d016" stroke-width="2.2" stroke-linejoin="miter"/></svg>
<div class="t" style="left:80.8px;top:313px;color:#333;letter-spacing:-0.35px">ТД00-000004</div>
<svg class="a" style="left:263px;top:311px" width="17" height="17" viewBox="0 0 17 17"><path d="M2 9L6.3 15L16.3 1.8" fill="none" stroke="#0f9a48" stroke-width="2.6" stroke-linecap="round" stroke-linejoin="round"/></svg>
<div class="t" style="left:303.5px;top:313px;color:#333">05.04.2017</div>
<div class="t" style="right:1079px;top:313px;color:#333">77 187,50</div>
<div class="t" style="left:676.5px;top:313px;color:#333">RUB</div>
<div class="t" style="left:758px;top:313px;color:#333">Оплата  по счету на оплату №1 (заказ пылес…</div>
<div class="t" style="left:1149.5px;top:313px;color:#333">Альтаир</div>
<div class="t" style="left:1400px;top:313px;color:#333">Поступление о…</div>
<div class="t" style="left:1557px;top:313px;color:#333">78</div>
<div class="a" style="left:0px;top:340px;width:1606px;height:33px;background:#f9f9f9"></div>
<div class="a" style="left:0px;top:373px;width:1606px;height:1px;background:#e4e4e4"></div>
<svg class="a" style="left:11px;top:348px" width="18" height="19" viewBox="0 0 18 19"><path d="M9 1.1Q9.8 1.1 10.3 1.9L17.5 15.2Q18 17.4 16.4 17.4H1.6Q0 17.4 0.5 15.2L7.7 1.9Q8.2 1.1 9 1.1Z" fill="#e85b4c" stroke="#c4473a" stroke-width="0.8"/><rect x="8" y="6" width="2" height="6" fill="#fff"/><rect x="8" y="14" width="2" height="2" fill="#fff"/></svg>
<svg class="a" style="left:51px;top:350px" width="21" height="17" viewBox="0 0 21 17"><rect x="0.5" y="0.5" width="19" height="14" rx="1.8" fill="#fff" stroke="#6b7585" stroke-width="1"/><g stroke="#8d99a6" stroke-width="1"><path d="M2 2.5H18M2 4.5H18M2 6.5H18M2 8.5H15M2 10.5H7M2 12.5H7"/></g><path d="M9.2 11.3L12.8 15L19.5 8.5" fill="none" stroke="#139a13" stroke-width="3.6" stroke-linejoin="miter"/><path d="M9.2 11.3L12.8 15L19.5 8.5" fill="none" stroke="#16d016" stroke-width="2.2" stroke-linejoin="miter"/></svg>
<div class="t" style="left:80.8px;top:347px;color:#333;letter-spacing:-0.35px">ТД00-П00005</div>
<svg class="a" style="left:263px;top:345px" width="17" height="17" viewBox="0 0 17 17"><path d="M2 9L6.3 15L16.3 1.8" fill="none" stroke="#0f9a48" stroke-width="2.6" stroke-linecap="round" stroke-linejoin="round"/></svg>
<div class="t" style="left:303.5px;top:347px;color:#333">05.04.2017</div>
<div class="t" style="right:951px;top:347px;color:#333">36 910,00</div>
<div class="t" style="left:676.5px;top:347px;color:#333">RUB</div>
<div class="t" style="left:1149.5px;top:347px;color:#333">База "Продукты"</div>
<div class="t" style="left:1400px;top:347px;color:#333">Оплата постав…</div>
<div class="t" style="left:1557px;top:347px;color:#333">567</div>
<div class="a" style="left:0px;top:374px;width:1606px;height:33px;background:#fff"></div>
<div class="a" style="left:0px;top:407px;width:1606px;height:1px;background:#e4e4e4"></div>
<svg class="a" style="left:11px;top:382px" width="18" height="19" viewBox="0 0 18 19"><path d="M9 1.1Q9.8 1.1 10.3 1.9L17.5 15.2Q18 17.4 16.4 17.4H1.6Q0 17.4 0.5 15.2L7.7 1.9Q8.2 1.1 9 1.1Z" fill="#e85b4c" stroke="#c4473a" stroke-width="0.8"/><rect x="8" y="6" width="2" height="6" fill="#fff"/><rect x="8" y="14" width="2" height="2" fill="#fff"/></svg>
<svg class="a" style="left:51px;top:384px" width="21" height="17" viewBox="0 0 21 17"><rect x="0.5" y="0.5" width="19" height="14" rx="1.8" fill="#fff" stroke="#6b7585" stroke-width="1"/><g stroke="#8d99a6" stroke-width="1"><path d="M2 2.5H18M2 4.5H18M2 6.5H18M2 8.5H15M2 10.5H7M2 12.5H7"/></g><path d="M9.2 11.3L12.8 15L19.5 8.5" fill="none" stroke="#139a13" stroke-width="3.6" stroke-linejoin="miter"/><path d="M9.2 11.3L12.8 15L19.5 8.5" fill="none" stroke="#16d016" stroke-width="2.2" stroke-linejoin="miter"/></svg>
<div class="t" style="left:80.8px;top:381px;color:#333;letter-spacing:-0.35px">ТД00-000001</div>
<svg class="a" style="left:263px;top:379px" width="17" height="17" viewBox="0 0 17 17"><path d="M2 9L6.3 15L16.3 1.8" fill="none" stroke="#0f9a48" stroke-width="2.6" stroke-linecap="round" stroke-linejoin="round"/></svg>
<div class="t" style="left:303.5px;top:381px;color:#333">06.04.2017</div>
<div class="t" style="right:1079px;top:381px;color:#333">42 000,00</div>
<div class="t" style="left:676.5px;top:381px;color:#333">RUB</div>
<div class="t" style="left:758px;top:381px;color:#333">Оплата по заказу №1</div>
<div class="t" style="left:1149.5px;top:381px;color:#333">Лина</div>
<div class="t" style="left:1400px;top:381px;color:#333">Поступление о…</div>
<div class="t" style="left:1557px;top:381px;color:#333">56</div>
<div class="a" style="left:0px;top:408px;width:1606px;height:33px;background:#f9f9f9"></div>
<div class="a" style="left:0px;top:441px;width:1606px;height:1px;background:#e4e4e4"></div>
<svg class="a" style="left:51px;top:418px" width="21" height="17" viewBox="0 0 21 17"><rect x="0.5" y="0.5" width="19" height="14" rx="1.8" fill="#fff" stroke="#6b7585" stroke-width="1"/><g stroke="#8d99a6" stroke-width="1"><path d="M2 2.5H18M2 4.5H18M2 6.5H18M2 8.5H15M2 10.5H7M2 12.5H7"/></g><path d="M9.2 11.3L12.8 15L19.5 8.5" fill="none" stroke="#139a13" stroke-width="3.6" stroke-linejoin="miter"/><path d="M9.2 11.3L12.8 15L19.5 8.5" fill="none" stroke="#16d016" stroke-width="2.2" stroke-linejoin="miter"/></svg>
<div class="t" style="left:80.8px;top:415px;color:#333;letter-spacing:-0.35px">ТД00-000003</div>
<svg class="a" style="left:263px;top:413px" width="17" height="17" viewBox="0 0 17 17"><path d="M2 9L6.3 15L16.3 1.8" fill="none" stroke="#0f9a48" stroke-width="2.6" stroke-linecap="round" stroke-linejoin="round"/></svg>
<div class="t" style="left:303.5px;top:415px;color:#333">06.04.2017</div>
<div class="t" style="right:1079px;top:415px;color:#333">18 776,40</div>
<div class="t" style="left:676.5px;top:415px;color:#333">RUB</div>
<div class="t" style="left:758px;top:415px;color:#333">Перечисление из банка суммы платежей по э…</div>
<div class="t" style="left:1149.5px;top:415px;color:#333">АвтБанк АКБ</div>
<div class="t" style="left:1400px;top:415px;color:#333">Поступление о…</div>
<div class="t" style="left:1557px;top:415px;color:#333">89</div>
<div class="a" style="left:0px;top:442px;width:1606px;height:33px;background:#fff"></div>
<div class="a" style="left:0px;top:475px;width:1606px;height:1px;background:#e4e4e4"></div>
<svg class="a" style="left:11px;top:450px" width="18" height="19" viewBox="0 0 18 19"><path d="M9 1.1Q9.8 1.1 10.3 1.9L17.5 15.2Q18 17.4 16.4 17.4H1.6Q0 17.4 0.5 15.2L7.7 1.9Q8.2 1.1 9 1.1Z" fill="#e85b4c" stroke="#c4473a" stroke-width="0.8"/><rect x="8" y="6" width="2" height="6" fill="#fff"/><rect x="8" y="14" width="2" height="2" fill="#fff"/></svg>
<svg class="a" style="left:51px;top:452px" width="21" height="17" viewBox="0 0 21 17"><rect x="0.5" y="0.5" width="19" height="14" rx="1.8" fill="#fff" stroke="#6b7585" stroke-width="1"/><g stroke="#8d99a6" stroke-width="1"><path d="M2 2.5H18M2 4.5H18M2 6.5H18M2 8.5H15M2 10.5H7M2 12.5H7"/></g><path d="M9.2 11.3L12.8 15L19.5 8.5" fill="none" stroke="#139a13" stroke-width="3.6" stroke-linejoin="miter"/><path d="M9.2 11.3L12.8 15L19.5 8.5" fill="none" stroke="#16d016" stroke-width="2.2" stroke-linejoin="miter"/></svg>
<div class="t" style="left:80.8px;top:449px;color:#333;letter-spacing:-0.35px">ТД00-000007</div>
<svg class="a" style="left:263px;top:447px" width="17" height="17" viewBox="0 0 17 17"><path d="M2 9L6.3 15L16.3 1.8" fill="none" stroke="#0f9a48" stroke-width="2.6" stroke-linecap="round" stroke-linejoin="round"/></svg>
<div class="t" style="left:303.5px;top:449px;color:#333">10.04.2017</div>
<div class="t" style="right:1079px;top:449px;color:#333">69 057,84</div>
<div class="t" style="left:676.5px;top:449px;color:#333">RUB</div>
<div class="t" style="left:758px;top:449px;color:#333">Оплата по заказу №4</div>
<div class="t" style="left:1149.5px;top:449px;color:#333">ИнноТрейд</div>
<div class="t" style="left:1400px;top:449px;color:#333">Поступление о…</div>
<div class="t" style="left:1557px;top:449px;color:#333">89</div>
<div class="a" style="left:0px;top:476px;width:1606px;height:33px;background:#f9f9f9"></div>
<div class="a" style="left:0px;top:509px;width:1606px;height:1px;background:#e4e4e4"></div>
<svg class="a" style="left:51px;top:486px" width="21" height="17" viewBox="0 0 21 17"><rect x="0.5" y="0.5" width="19" height="14" rx="1.8" fill="#fff" stroke="#6b7585" stroke-width="1"/><g stroke="#8d99a6" stroke-width="1"><path d="M2 2.5H18M2 4.5H18M2 6.5H18M2 8.5H15M2 10.5H7M2 12.5H7"/></g><path d="M9.2 11.3L12.8 15L19.5 8.5" fill="none" stroke="#139a13" stroke-width="3.6" stroke-linejoin="miter"/><path d="M9.2 11.3L12.8 15L19.5 8.5" fill="none" stroke="#16d016" stroke-width="2.2" stroke-linejoin="miter"/></svg>
<div class="t" style="left:80.8px;top:483px;color:#333;letter-spacing:-0.35px">ТД00-000008</div>
<svg class="a" style="left:263px;top:481px" width="17" height="17" viewBox="0 0 17 17"><path d="M2 9L6.3 15L16.3 1.8" fill="none" stroke="#0f9a48" stroke-width="2.6" stroke-linecap="round" stroke-linejoin="round"/></svg>
<div class="t" style="left:303.5px;top:483px;color:#333">10.04.2017</div>
<div class="t" style="right:1079px;top:483px;color:#333">71 861,65</div>
<div class="t" style="left:676.5px;top:483px;color:#333">RUB</div>
<div class="t" style="left:758px;top:483px;color:#333">Оплата по заказу №5</div>
<div class="t" style="left:1149.5px;top:483px;color:#333">Энигма</div>
<div class="t" style="left:1400px;top:483px;color:#333">Поступление о…</div>
<div class="t" style="left:1557px;top:483px;color:#333">67</div>
<div class="a" style="left:0px;top:510px;width:1606px;height:33px;background:#fff"></div>
<div class="a" style="left:0px;top:543px;width:1606px;height:1px;background:#e4e4e4"></div>
<svg class="a" style="left:11px;top:518px" width="18" height="19" viewBox="0 0 18 19"><path d="M9 1.1Q9.8 1.1 10.3 1.9L17.5 15.2Q18 17.4 16.4 17.4H1.6Q0 17.4 0.5 15.2L7.7 1.9Q8.2 1.1 9 1.1Z" fill="#e85b4c" stroke="#c4473a" stroke-width="0.8"/><rect x="8" y="6" width="2" height="6" fill="#fff"/><rect x="8" y="14" width="2" height="2" fill="#fff"/></svg>
<svg class="a" style="left:51px;top:520px" width="21" height="17" viewBox="0 0 21 17"><rect x="0.5" y="0.5" width="19" height="14" rx="1.8" fill="#fff" stroke="#6b7585" stroke-width="1"/><g stroke="#8d99a6" stroke-width="1"><path d="M2 2.5H18M2 4.5H18M2 6.5H18M2 8.5H15M2 10.5H7M2 12.5H7"/></g><path d="M9.2 11.3L12.8 15L19.5 8.5" fill="none" stroke="#139a13" stroke-width="3.6" stroke-linejoin="miter"/><path d="M9.2 11.3L12.8 15L19.5 8.5" fill="none" stroke="#16d016" stroke-width="2.2" stroke-linejoin="miter"/></svg>
<div class="t" style="left:80.8px;top:517px;color:#333;letter-spacing:-0.35px">ТД00-000009</div>
<svg class="a" style="left:263px;top:515px" width="17" height="17" viewBox="0 0 17 17"><path d="M2 9L6.3 15L16.3 1.8" fill="none" stroke="#0f9a48" stroke-width="2.6" stroke-linecap="round" stroke-linejoin="round"/></svg>
<div class="t" style="left:303.5px;top:517px;color:#333">10.04.2017</div>
<div class="t" style="right:1079px;top:517px;color:#333">193 315,50</div>
<div class="t" style="left:676.5px;top:517px;color:#333">RUB</div>
<div class="t" style="left:758px;top:517px;color:#333">Оплата по заказу №7</div>
<div class="t" style="left:1149.5px;top:517px;color:#333">Пилигрим</div>
<div class="t" style="left:1400px;top:517px;color:#333">Поступление о…</div>
<div class="t" style="left:1557px;top:517px;color:#333">67</div>
<div class="a" style="left:0px;top:544px;width:1606px;height:33px;background:#f9f9f9"></div>
<div class="a" style="left:0px;top:577px;width:1606px;height:1px;background:#e4e4e4"></div>
<svg class="a" style="left:51px;top:554px" width="21" height="17" viewBox="0 0 21 17"><rect x="0.5" y="0.5" width="19" height="14" rx="1.8" fill="#fff" stroke="#6b7585" stroke-width="1"/><g stroke="#8d99a6" stroke-width="1"><path d="M2 2.5H18M2 4.5H18M2 6.5H18M2 8.5H15M2 10.5H7M2 12.5H7"/></g><path d="M9.2 11.3L12.8 15L19.5 8.5" fill="none" stroke="#139a13" stroke-width="3.6" stroke-linejoin="miter"/><path d="M9.2 11.3L12.8 15L19.5 8.5" fill="none" stroke="#16d016" stroke-width="2.2" stroke-linejoin="miter"/></svg>
<div class="t" style="left:80.8px;top:551px;color:#333;letter-spacing:-0.35px">ЧП00-000005</div>
<svg class="a" style="left:263px;top:549px" width="17" height="17" viewBox="0 0 17 17"><path d="M2 9L6.3 15L16.3 1.8" fill="none" stroke="#0f9a48" stroke-width="2.6" stroke-linecap="round" stroke-linejoin="round"/></svg>
<div class="t" style="left:303.5px;top:551px;color:#333">10.04.2017</div>
<div class="t" style="right:1079px;top:551px;color:#333">7 644,00</div>
<div class="t" style="left:676.5px;top:551px;color:#333">RUB</div>
<div class="t" style="left:1149.5px;top:551px;color:#333">Все для дома</div>
<div class="t" style="left:1400px;top:551px;color:#333">Поступление о…</div>
<div class="t" style="left:1557px;top:551px;color:#333">76</div>
</div>
<svg class="a" style="left:27px;top:836px;" width="8" height="9" viewBox="0 0 8 9"><path d="M6 0.5V7.5L1.5 4Z" fill="#c8c8c8"/></svg>
<div class="a" style="left:45px;top:835px;width:1411px;height:10px;background:#d6d6d6;border-radius:5px"></div>
<div class="a" style="left:45px;top:835px;width:760px;height:10px;background:#9a9a9a;border-radius:5px"></div>
<svg class="a" style="left:1467px;top:837px;" width="8" height="8" viewBox="0 0 8 8"><path d="M1.2 1V6L5.8 3.5Z" fill="#444"/></svg>
<div class="a" style="left:1503px;top:828px;width:30px;height:26px;border-left:1px solid #a0a0a0;border-top:1px solid #a0a0a0;box-sizing:border-box;background:#fff"></div>
<div class="a" style="left:1533px;top:828px;width:30px;height:26px;border-left:1px solid #a0a0a0;border-top:1px solid #a0a0a0;box-sizing:border-box;background:#fff"></div>
<div class="a" style="left:1563px;top:828px;width:30px;height:26px;border-left:1px solid #a0a0a0;border-top:1px solid #a0a0a0;box-sizing:border-box;background:linear-gradient(#fff 0,#fff 40%,#efefef 100%)"></div>
<div class="a" style="left:1593px;top:828px;width:30px;height:26px;border-left:1px solid #a0a0a0;border-top:1px solid #a0a0a0;box-sizing:border-box;background:linear-gradient(#fff 0,#fff 40%,#efefef 100%)"></div>
<svg class="a" style="left:1511px;top:836px;" width="16" height="11" viewBox="0 0 16 11"><rect x="2" y="1.6" width="11" height="1.1" fill="#aaa"/><path d="M1 8.8L7.5 2.3L14 8.8Z" fill="#aaa"/></svg>
<svg class="a" style="left:1541px;top:836px;" width="16" height="11" viewBox="0 0 16 11"><path d="M1 8.9L7.5 2.3L14 8.9Z" fill="#aaa"/></svg>
<svg class="a" style="left:1571px;top:836px;" width="16" height="11" viewBox="0 0 16 11"><path d="M1 2.8L7.5 9.8L14 2.8Z" fill="#333"/></svg>
<svg class="a" style="left:1601px;top:836px;" width="16" height="12" viewBox="0 0 16 12"><rect x="2" y="9" width="11" height="1.4" fill="#aaa"/><path d="M1 2.8L7.5 9.6L14 2.8Z" fill="#333"/></svg>
<svg class="a" style="left:17px;top:871px;" width="18" height="21" viewBox="0 0 18 21"><path d="M1.5 19.5V1.5H11.5L15.5 5.5V19.5Z" fill="#fff" stroke="#788494" stroke-width="1"/><path d="M11.3 1.6V5.7H15.4Z" fill="#8a96a4"/><rect x="3.6" y="9" width="1.6" height="7" fill="#aaa"/><rect x="5.4" y="11" width="2.6" height="5" fill="#e8402a"/><rect x="9" y="12" width="2.6" height="4" fill="#3aa02a"/><rect x="3.6" y="16" width="9" height="0.9" fill="#999"/></svg>
<div class="t u" style="left:42.5px;top:871px;color:#1a56c4;">Сверка выписок</div>
<div class="t " style="left:282px;top:871px;color:#404040;">За период с 01.01.2017 по 31.10.2022</div>
<div class="t " style="left:687.5px;top:871px;color:#404040;">На начало:</div>
<div class="inp2" style="left:778px;top:866px;width:137px;height:27px"></div>
<div class="t" style="right:723px;top:871px;color:#333;">0,00</div>
<div class="t " style="left:930px;top:871px;color:#404040;">Поступило:</div>
<div class="inp2" style="left:1024px;top:866px;width:137px;height:27px"></div>
<div class="t" style="right:477px;top:871px;color:#333;">0,00</div>
<div class="t " style="left:1176.5px;top:871px;color:#404040;">Списано:</div>
<div class="inp2" style="left:1253px;top:866px;width:137px;height:27px"></div>
<div class="t" style="right:248px;top:871px;color:#333;">0,00</div>
<div class="t " style="left:1405px;top:871px;color:#404040;">На конец:</div>
<div class="inp2" style="left:1485px;top:866px;width:137px;height:27px"></div>
<div class="t" style="right:16px;top:871px;color:#333;">0,00</div>
<div class="t " style="left:17px;top:911px;color:#333;">&lt;Банковский счет не задан&gt;</div>
<div class="t " style="left:850.5px;top:911px;color:#404040;">Остаток на счете:</div>
<div class="inp2" style="left:994px;top:906px;width:137px;height:27px"></div>
<div class="t" style="right:507px;top:911px;color:#333;">0,00</div>
<div class="t " style="left:1146px;top:911px;color:#404040;">К списанию:</div>
<div class="inp2" style="left:1248px;top:906px;width:137px;height:27px"></div>
<div class="t" style="right:253px;top:911px;color:#333;">0,00</div>
<div class="t " style="left:1400px;top:911px;color:#404040;">Доступно:</div>
<div class="inp2" style="left:1485px;top:906px;width:137px;height:27px"></div>
<div class="t" style="right:16px;top:911px;color:#333;">0,00</div>
</body></html>
